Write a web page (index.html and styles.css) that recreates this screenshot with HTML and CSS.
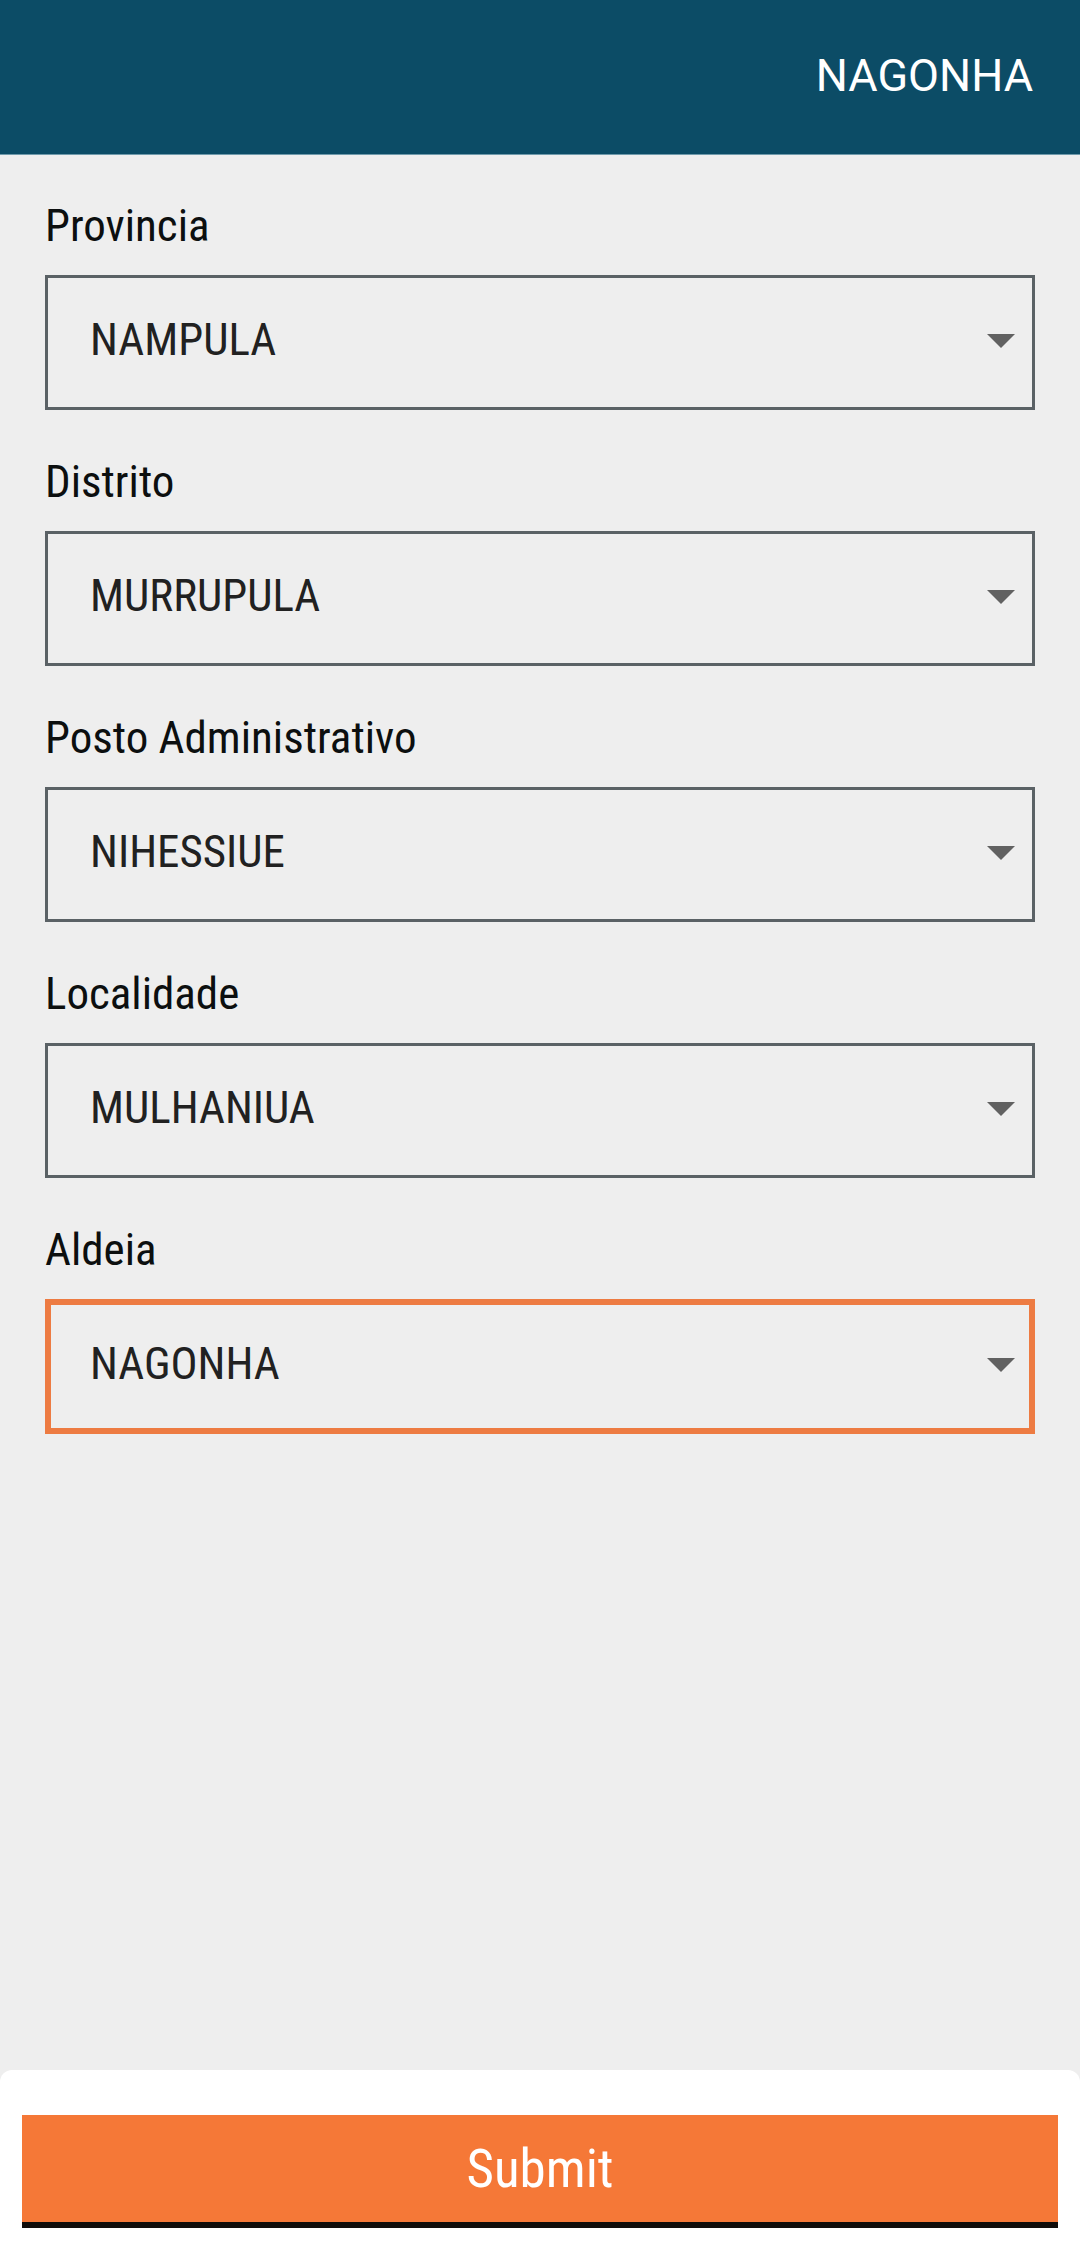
FILE: index.html
```html
<!DOCTYPE html>
<html lang="pt">
<head>
<meta charset="utf-8">
<meta name="viewport" content="width=device-width, initial-scale=1">
<title>NAGONHA</title>
<link rel="stylesheet" href="styles.css">
</head>
<body>
<header class="topbar"><h1 class="topbar-title">NAGONHA</h1></header>
<form class="screen">
  <main class="fields">
    <div class="field">
      <label for="provincia">Provincia</label>
      <div class="picker">
        <select id="provincia"><option>NAMPULA</option></select>
        <svg class="arrow" viewBox="0 0 28 14" aria-hidden="true"><path d="M0 0h28L14 14z"/></svg>
      </div>
    </div>
    <div class="field">
      <label for="distrito">Distrito</label>
      <div class="picker">
        <select id="distrito"><option>MURRUPULA</option></select>
        <svg class="arrow" viewBox="0 0 28 14" aria-hidden="true"><path d="M0 0h28L14 14z"/></svg>
      </div>
    </div>
    <div class="field">
      <label for="posto">Posto Administrativo</label>
      <div class="picker">
        <select id="posto"><option>NIHESSIUE</option></select>
        <svg class="arrow" viewBox="0 0 28 14" aria-hidden="true"><path d="M0 0h28L14 14z"/></svg>
      </div>
    </div>
    <div class="field">
      <label for="localidade">Localidade</label>
      <div class="picker">
        <select id="localidade"><option>MULHANIUA</option></select>
        <svg class="arrow" viewBox="0 0 28 14" aria-hidden="true"><path d="M0 0h28L14 14z"/></svg>
      </div>
    </div>
    <div class="field">
      <label for="aldeia">Aldeia</label>
      <div class="picker picker-active">
        <select id="aldeia"><option>NAGONHA</option></select>
        <svg class="arrow" viewBox="0 0 28 14" aria-hidden="true"><path d="M0 0h28L14 14z"/></svg>
      </div>
    </div>
  </main>
  <footer class="actions"><button class="submit" type="submit">Submit</button></footer>
</form>
</body>
</html>
```
FILE: styles.css
```css
* {
  box-sizing: border-box;
}

body {
  margin: 0;
  min-height: 100vh;
  display: flex;
  flex-direction: column;
  background: #eeeeee;
  color: #0c0f0f;
  font-family: "Roboto Condensed", "Liberation Sans Narrow", Roboto, sans-serif;
  font-size: 45px;
  line-height: 60px;
}

.topbar {
  padding: 46px 47px 48px;
  background: #0c4c66;
  border-bottom: 1px solid #6f9aab;
}

.topbar-title {
  margin: 0;
  color: #fff;
  font-family: Roboto, sans-serif;
  font-size: 45px;
  font-weight: 400;
  text-align: right;
}

.screen {
  flex: 1;
  display: flex;
  flex-direction: column;
}

.fields {
  flex: 1;
  display: flex;
  flex-direction: column;
  gap: 42px;
  padding: 41px 45px;
}

.field {
  display: flex;
  flex-direction: column;
  gap: 19px;
}

.picker {
  position: relative;
  display: flex;
}

.picker select {
  flex: 1;
  height: 135px;
  margin: 0;
  padding: 0 60px 6px 42px;
  appearance: none;
  background: transparent;
  border: 3px solid #5a6165;
  border-radius: 0;
  color: #212121;
  font: inherit;
}

.picker-active select {
  padding: 0 57px 6px 39px;
  border: 6px solid #ed7b42;
}

.arrow {
  position: absolute;
  top: 59px;
  right: 20px;
  width: 28px;
  height: 14px;
  fill: #616161;
  pointer-events: none;
}

.actions {
  display: flex;
  padding: 45px 22px 34px;
  background: #fff;
  border-radius: 12px 12px 0 0;
}

.submit {
  flex: 1;
  height: 113px;
  padding: 0;
  background: #f57837;
  border: 0;
  border-bottom: 6px solid #100c0a;
  color: #fff;
  font-family: inherit;
  font-size: 53px;
}
```
